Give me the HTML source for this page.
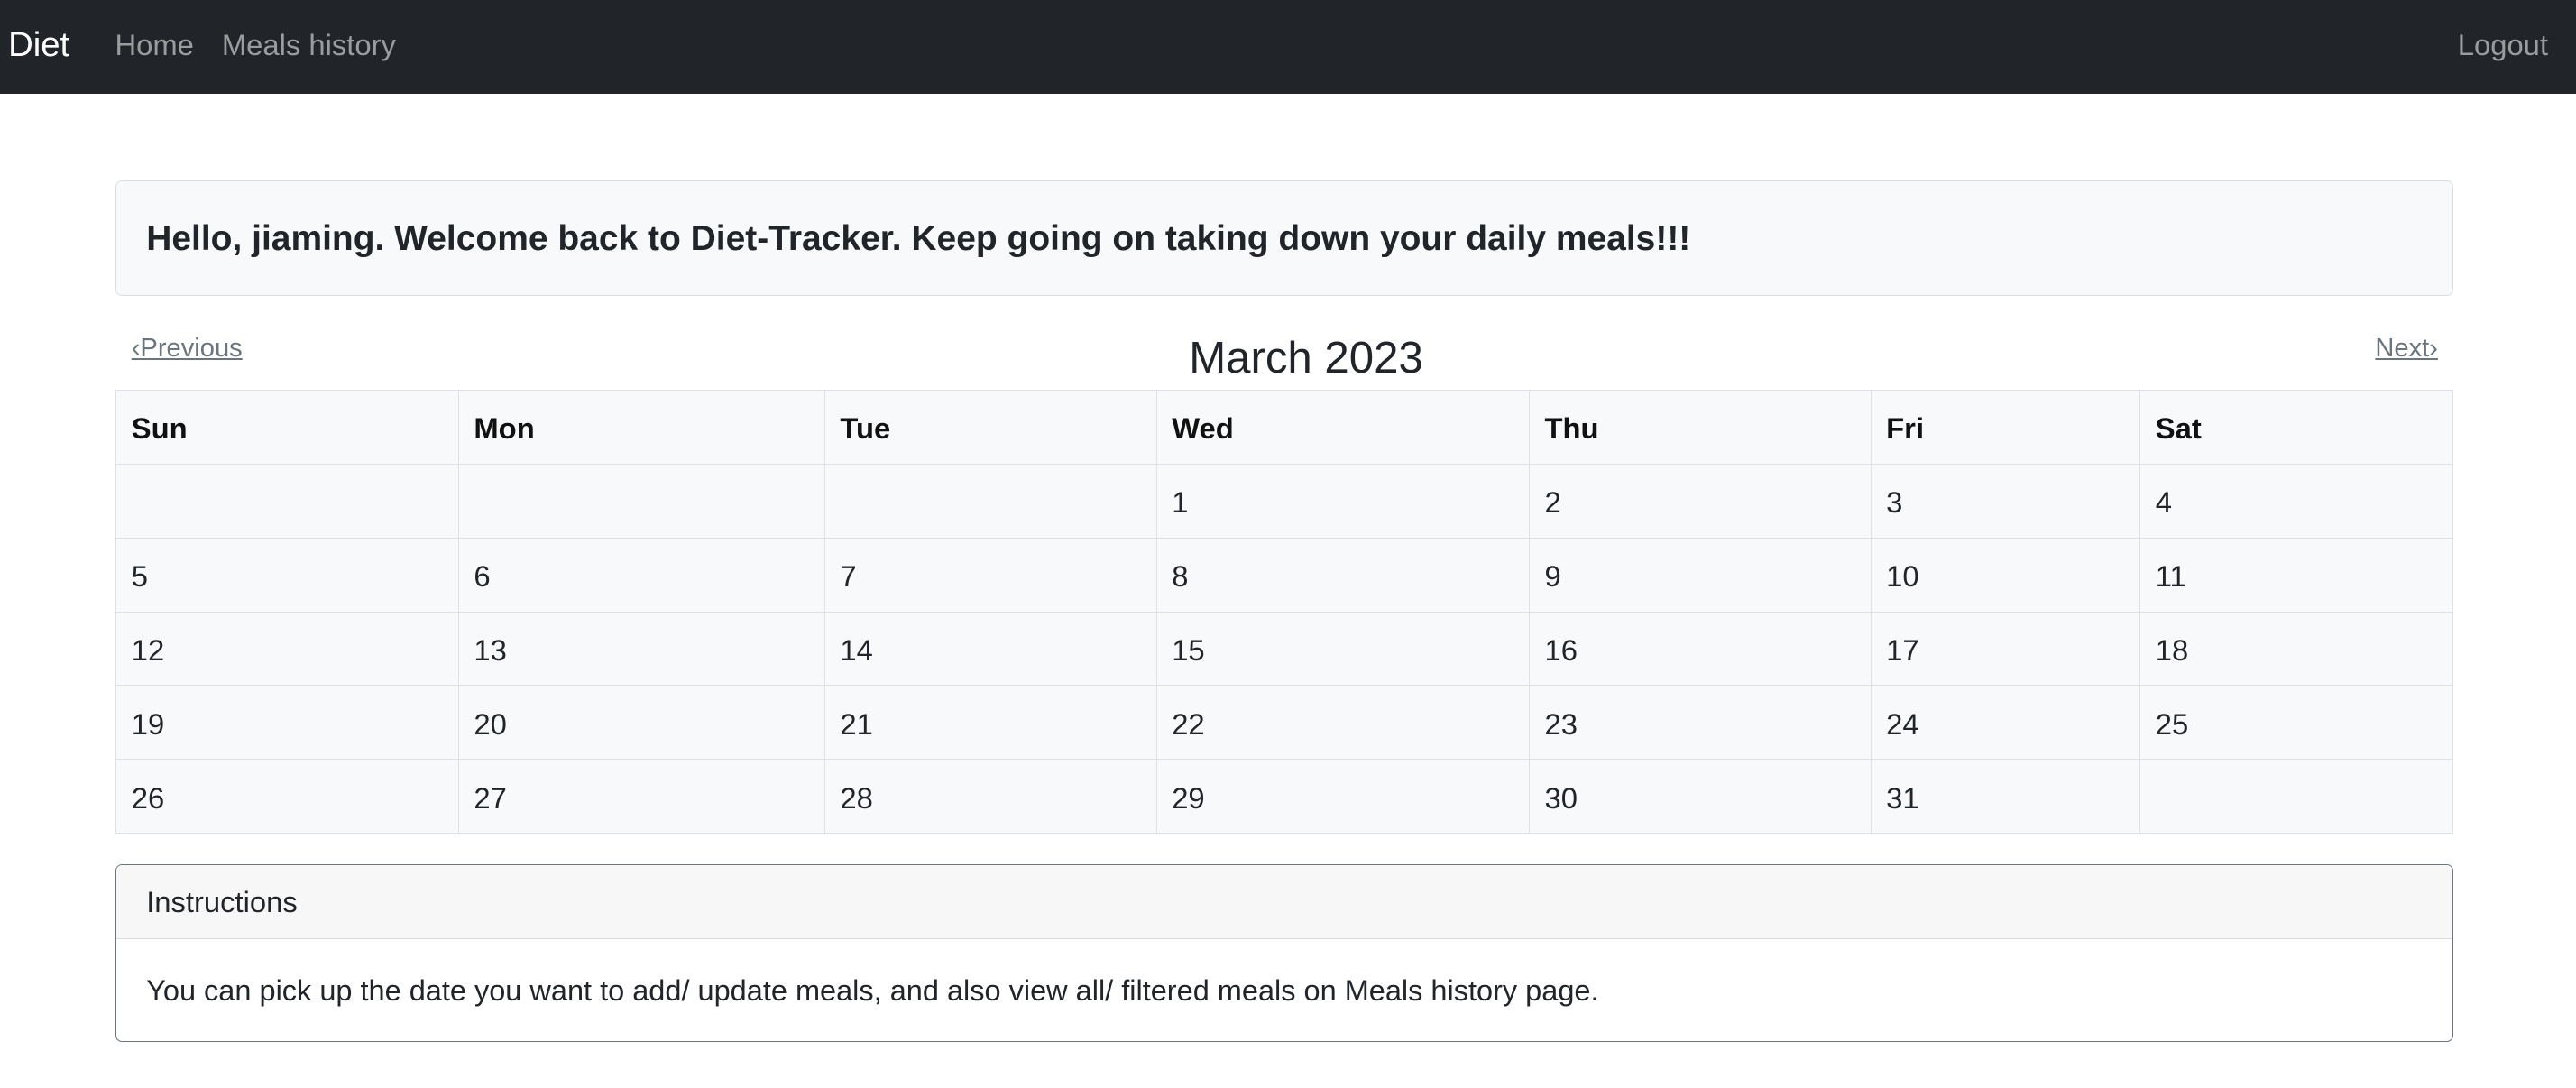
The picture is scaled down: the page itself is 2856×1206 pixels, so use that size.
<!DOCTYPE html>
<html><head><meta charset="utf-8">
<style>
html{zoom:1.8214;}
*{box-sizing:border-box;margin:0;padding:0;}
body{width:1568px;height:662px;overflow:hidden;background:#fff;font-family:"Liberation Sans",Arial,sans-serif;color:#212529;font-size:18px;position:relative;}
.nav{position:absolute;left:0;top:0;width:1568px;height:57px;background:#212529;}
.nav span{position:absolute;top:0;line-height:55px;color:rgba(255,255,255,.55);font-size:18px;}
.brand{left:5px;color:#fff!important;font-size:21px!important;}
.alert{position:absolute;left:70.5px;top:110px;width:1423px;height:70px;background:#f8f9fa;border:1px solid #dcdee0;border-radius:4px;}
.alert b{position:absolute;left:18px;top:23px;font-size:21.4px;line-height:24px;color:#212529;}
.pn{position:absolute;top:202px;font-size:16px;color:#6c757d;text-decoration:underline;line-height:20px;}
.title{position:absolute;left:0;width:1590px;text-align:center;top:201px;font-size:27px;line-height:34px;}
table{position:absolute;left:70.5px;top:237px;width:1423px;border-collapse:collapse;background:#f8f9fa;}
td,th{border:1px solid #dee2e6;height:45px;padding:2px 9px 0;text-align:left;vertical-align:middle;font-size:18px;}
th{color:#111;font-weight:bold;}
.card{position:absolute;left:70.5px;top:526px;width:1423px;height:108px;border:1px solid #6c757d;border-radius:4px;overflow:hidden;}
.ch{height:45px;background:#f7f7f7;border-bottom:1px solid #dadada;padding-left:18px;line-height:45px;font-size:18px;}
.cb{padding-left:18px;line-height:63px;font-size:17.85px;}
</style></head><body>
<div class="nav">
<span class="brand">Diet</span>
<span style="left:70px">Home</span>
<span style="left:135px">Meals history</span>
<span style="right:17px">Logout</span>
</div>
<div class="alert"><b>Hello, jiaming. Welcome back to Diet-Tracker. Keep going on taking down your daily meals!!!</b></div>
<span class="pn" style="left:80px">‹Previous</span>
<span class="pn" style="right:84px">Next›</span>
<div class="title">March 2023</div>
<table>
<colgroup><col style="width:208.5px"><col style="width:223px"><col style="width:202px"><col style="width:227px"><col style="width:208px"><col style="width:164px"><col style="width:190.5px"></colgroup>
<tr><th>Sun</th><th>Mon</th><th>Tue</th><th>Wed</th><th>Thu</th><th>Fri</th><th>Sat</th></tr>
<tr><td></td><td></td><td></td><td>1</td><td>2</td><td>3</td><td>4</td></tr>
<tr><td>5</td><td>6</td><td>7</td><td>8</td><td>9</td><td>10</td><td>11</td></tr>
<tr><td>12</td><td>13</td><td>14</td><td>15</td><td>16</td><td>17</td><td>18</td></tr>
<tr><td>19</td><td>20</td><td>21</td><td>22</td><td>23</td><td>24</td><td>25</td></tr>
<tr><td>26</td><td>27</td><td>28</td><td>29</td><td>30</td><td>31</td><td></td></tr>
</table>
<div class="card">
<div class="ch">Instructions</div>
<div class="cb">You can pick up the date you want to add/ update meals, and also view all/ filtered meals on Meals history page.</div>
</div>
</body></html>
